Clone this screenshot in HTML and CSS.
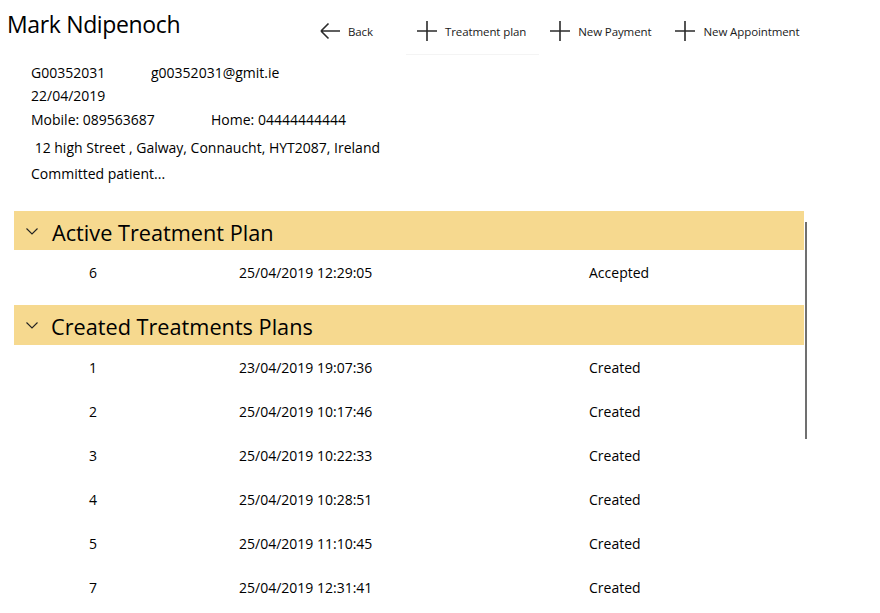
FILE: index.html
```html
<!DOCTYPE html>
<html>
<head>
<meta charset="utf-8">
<link rel="stylesheet" href="styles.css">
</head>
<body>
<div class="page">
  <header class="top">
    <h1 class="name">Mark Ndipenoch</h1>
    <nav class="toolbar">
      <button class="tb-btn tb-back">
        <svg class="ico" viewBox="0 0 20 20" width="20" height="20"><path d="M1 10H20M1 10L8.5 2.5M1 10L8.5 17.5" fill="none" stroke="#2b2b2b" stroke-width="1.6"/></svg>
        <span>Back</span>
      </button>
      <button class="tb-btn tb-focus">
        <svg class="ico" viewBox="0 0 20 20" width="20" height="20"><path d="M10 0V20M0 10H20" fill="none" stroke="#2b2b2b" stroke-width="1.6"/></svg>
        <span>Treatment plan</span>
      </button>
      <button class="tb-btn">
        <svg class="ico" viewBox="0 0 20 20" width="20" height="20"><path d="M10 0V20M0 10H20" fill="none" stroke="#2b2b2b" stroke-width="1.6"/></svg>
        <span>New Payment</span>
      </button>
      <button class="tb-btn">
        <svg class="ico" viewBox="0 0 20 20" width="20" height="20"><path d="M10 0V20M0 10H20" fill="none" stroke="#2b2b2b" stroke-width="1.6"/></svg>
        <span>New Appointment</span>
      </button>
    </nav>
  </header>

  <section class="info">
    <div class="info-line l1"><span class="c1">G00352031</span><span>g00352031@gmit.ie</span></div>
    <div class="info-line l2"><span>22/04/2019</span></div>
    <div class="info-line l3"><span class="c2">Mobile: 089563687</span><span>Home: 04444444444</span></div>
    <div class="info-line l4"><span>&nbsp;12 high Street , Galway, Connaucht, HYT2087, Ireland</span></div>
    <div class="info-line l5"><span>Committed patient...</span></div>
  </section>

  <section class="lists">
    <div class="group">
      <div class="group-head">
        <svg class="chev" viewBox="0 0 12 7" width="12" height="7"><path d="M0.5 0.5L6 6L11.5 0.5" fill="none" stroke="#222" stroke-width="1.1"/></svg>
        <span class="gh-text">Active Treatment Plan</span>
      </div>
      <div class="row"><span class="col-id">6</span><span class="col-date">25/04/2019 12:29:05</span><span class="col-st">Accepted</span></div>
    </div>
    <div class="group g2">
      <div class="group-head">
        <svg class="chev" viewBox="0 0 12 7" width="12" height="7"><path d="M0.5 0.5L6 6L11.5 0.5" fill="none" stroke="#222" stroke-width="1.1"/></svg>
        <span class="gh-text">Created Treatments Plans</span>
      </div>
      <div class="row"><span class="col-id">1</span><span class="col-date">23/04/2019 19:07:36</span><span class="col-st">Created</span></div>
      <div class="row"><span class="col-id">2</span><span class="col-date">25/04/2019 10:17:46</span><span class="col-st">Created</span></div>
      <div class="row"><span class="col-id">3</span><span class="col-date">25/04/2019 10:22:33</span><span class="col-st">Created</span></div>
      <div class="row"><span class="col-id">4</span><span class="col-date">25/04/2019 10:28:51</span><span class="col-st">Created</span></div>
      <div class="row"><span class="col-id">5</span><span class="col-date">25/04/2019 11:10:45</span><span class="col-st">Created</span></div>
      <div class="row"><span class="col-id">7</span><span class="col-date">25/04/2019 12:31:41</span><span class="col-st">Created</span></div>
    </div>
    <div class="scrollbar"></div>
  </section>
</div>
</body>
</html>
```

FILE: styles.css
```css
* { box-sizing: border-box; }
html, body { margin: 0; padding: 0; background: #fff; }
body {
  font-family: "Open Sans", "Noto Sans", sans-serif;
  color: #000;
  width: 880px;
  height: 613px;
  overflow: hidden;
}
.page { position: relative; }

.top {
  display: flex;
  align-items: flex-start;
  height: 56px;
}
.name {
  margin: 0;
  padding: 8px 0 0 7px;
  font-weight: 400;
  font-size: 23px;
  line-height: 32px;
  letter-spacing: -0.35px;
  width: 308px;
  white-space: nowrap;
}
.toolbar {
  display: flex;
  padding-top: 8px;
}
.tb-btn {
  display: flex;
  align-items: center;
  gap: 8px;
  height: 46px;
  padding: 0 12px;
  border: none;
  background: #fff;
  font-family: inherit;
  font-size: 11.5px;
  color: #1a1a1a;
  letter-spacing: -0.1px;
  cursor: pointer;
}
.tb-back { width: 97px; }
.tb-focus { box-shadow: 1px 1px 0 #f4f4f4; }
.ico { flex: none; display: block; }

.info {
  padding-left: 31px;
  font-size: 14px;
}
.info-line { display: flex; white-space: nowrap; }
.l1 { height: 24px; line-height: 22px; margin-top: 6px; }
.l2 { height: 24px; line-height: 24px; margin-top: -2px; }
.l3 { height: 26px; line-height: 24px; }
.l4 { height: 26px; line-height: 24px; margin-top: 2px; }
.l5 { height: 26px; line-height: 24px; }
.c1 { width: 120px; }
.c2 { width: 180px; }

.lists {
  position: relative;
  margin-top: 23px;
}
.group { width: 804px; }
.g2 { margin-top: 11px; }
.group-head {
  margin-left: 14px;
  height: 39px;
  background: #f6d98f;
  display: flex;
  align-items: center;
  font-size: 21.7px;
}
.gh-text { padding-top: 3px; }
.g2 .group-head { height: 40px; }
.chev { margin: 1px 14px 0 12px; flex: none; }
.g2 .chev { margin-left: 12px; margin-right: 13px; }
.row {
  display: flex;
  align-items: center;
  height: 44px;
  font-size: 14px;
}
.col-id { width: 239px; padding-left: 89px; }
.col-date { width: 350px; }

.scrollbar {
  position: absolute;
  left: 805px;
  top: 11px;
  width: 2px;
  height: 217px;
  background: #707070;
}
```
